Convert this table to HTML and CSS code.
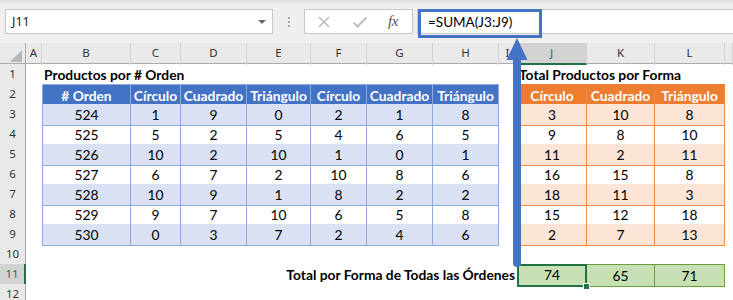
FILE: index.html
```html
<!DOCTYPE html>
<html lang="es">
<head>
    <meta charset="UTF-8">
    <title>Total Productos por Forma</title>
    <link rel="stylesheet" href="styles.css">
</head>
<body>
<div class="excel">
    <div class="formula-bar">
        <div class="name-box">J11<span class="drop"></span></div>
        <div class="grip"><i></i><i></i><i></i></div>
        <div class="fx-buttons">
            <svg class="btn-icon" width="14" height="14" viewBox="0 0 14 14"><path d="M2 2L12 12M12 2L2 12" stroke="#bdbdbd" stroke-width="1.6" fill="none"/></svg>
            <svg class="btn-icon" width="16" height="14" viewBox="0 0 16 14"><path d="M1.5 7.5L5.5 11.5L14.5 2.5" stroke="#bdbdbd" stroke-width="2" fill="none"/></svg>
            <span class="fx">fx</span>
        </div>
        <div class="formula">=SUMA(J3:J9)</div>
        <!-- callout around the formula -->
        <div class="formula-mark"></div>
    </div>

    <div class="sheet">
        <div class="row col-heads">
            <div class="corner"><span></span></div>
            <div class="ch">A</div><div class="ch">B</div><div class="ch">C</div><div class="ch">D</div>
            <div class="ch">E</div><div class="ch">F</div><div class="ch">G</div><div class="ch">H</div>
            <div class="ch">I</div><div class="ch active">J</div><div class="ch">K</div><div class="ch">L</div>
            <div class="ch"></div>
        </div>

        <div class="row">
            <div class="rh">1</div><div></div>
            <div class="title b-to-i">Productos por # Orden</div>
            <div class="title j-to-m">Total Productos por Forma</div>
        </div>

        <div class="row">
            <div class="rh">2</div><div></div>
            <div class="t th first"># Orden</div><div class="t th">Círculo</div><div class="t th">Cuadrado</div>
            <div class="t th">Triángulo</div><div class="t th">Círculo</div><div class="t th">Cuadrado</div>
            <div class="t th">Triángulo</div>
            <div></div>
            <div class="o th first">Círculo</div><div class="o th">Cuadrado</div><div class="o th">Triángulo</div>
            <div></div>
        </div>

        <div class="row">
            <div class="rh">3</div><div></div>
            <div class="t band first">524</div><div class="t band">1</div><div class="t band">9</div><div class="t band">0</div>
            <div class="t band">2</div><div class="t band">1</div><div class="t band">8</div>
            <div></div>
            <div class="o band first">3</div><div class="o band">10</div><div class="o band">8</div>
            <div></div>
        </div>

        <div class="row">
            <div class="rh">4</div><div></div>
            <div class="t first">525</div><div class="t">5</div><div class="t">2</div><div class="t">5</div>
            <div class="t">4</div><div class="t">6</div><div class="t">5</div>
            <div></div>
            <div class="o first">9</div><div class="o">8</div><div class="o">10</div>
            <div></div>
        </div>

        <div class="row">
            <div class="rh">5</div><div></div>
            <div class="t band first">526</div><div class="t band">10</div><div class="t band">2</div><div class="t band">10</div>
            <div class="t band">1</div><div class="t band">0</div><div class="t band">1</div>
            <div></div>
            <div class="o band first">11</div><div class="o band">2</div><div class="o band">11</div>
            <div></div>
        </div>

        <div class="row">
            <div class="rh">6</div><div></div>
            <div class="t first">527</div><div class="t">6</div><div class="t">7</div><div class="t">2</div>
            <div class="t">10</div><div class="t">8</div><div class="t">6</div>
            <div></div>
            <div class="o first">16</div><div class="o">15</div><div class="o">8</div>
            <div></div>
        </div>

        <div class="row">
            <div class="rh">7</div><div></div>
            <div class="t band first">528</div><div class="t band">10</div><div class="t band">9</div><div class="t band">1</div>
            <div class="t band">8</div><div class="t band">2</div><div class="t band">2</div>
            <div></div>
            <div class="o band first">18</div><div class="o band">11</div><div class="o band">3</div>
            <div></div>
        </div>

        <div class="row">
            <div class="rh">8</div><div></div>
            <div class="t first">529</div><div class="t">9</div><div class="t">7</div><div class="t">10</div>
            <div class="t">6</div><div class="t">5</div><div class="t">8</div>
            <div></div>
            <div class="o first">15</div><div class="o">12</div><div class="o">18</div>
            <div></div>
        </div>

        <div class="row">
            <div class="rh">9</div><div></div>
            <div class="t band first">530</div><div class="t band">0</div><div class="t band">3</div><div class="t band">7</div>
            <div class="t band">2</div><div class="t band">4</div><div class="t band">6</div>
            <div></div>
            <div class="o band first">2</div><div class="o band">7</div><div class="o band">13</div>
            <div></div>
        </div>

        <div class="row">
            <div class="rh">10</div>
        </div>

        <div class="row">
            <div class="rh active">11</div><div></div>
            <div class="title total b-to-i">Total por Forma de Todas las Órdenes</div>
            <div class="g selected">74<span class="handle"></span></div><div class="g">65</div><div class="g">71</div>
            <div></div>
        </div>

        <div class="row">
            <div class="rh">12</div>
        </div>
    </div>

    <svg class="arrow" width="733" height="300" viewBox="0 0 733 300">
        <rect x="513" y="54" width="8" height="213" rx="4" fill="#4472c4"/>
        <polygon points="517,38 527.5,60 506.5,60" fill="#4472c4"/>
    </svg>
</div>
</body>
</html>
```

FILE: styles.css
```css
body {
    margin: 0;
    background: #fff;
}

.excel {
    position: relative;
    width: 733px;
    height: 300px;
    overflow: hidden;
    font-family: 'Lato', 'Liberation Sans', sans-serif;
    color: #000;
}

/* formula bar */
.formula-bar {
    position: relative;
    display: flex;
    align-items: flex-start;
    height: 43px;
    padding: 9px 0 0 5px;
    box-sizing: border-box;
    background: linear-gradient(#dedede, #efefef 5px);
}

.name-box {
    position: relative;
    width: 268px;
    height: 25px;
    box-sizing: border-box;
    border: 1px solid #c6c6c6;
    background: #fff;
    font-family: 'Noto Sans', sans-serif;
    font-size: 12.5px;
    line-height: 23px;
    padding-left: 6px;
    color: #222;
}

.drop {
    position: absolute;
    right: 6px;
    top: 10px;
    border-left: 4px solid transparent;
    border-right: 4px solid transparent;
    border-top: 4px solid #6a6a6a;
}

.grip {
    display: flex;
    flex-direction: column;
    gap: 2px;
    width: 31px;
    padding-top: 8px;
    align-items: center;
}

.grip i {
    display: block;
    width: 2px;
    height: 2px;
    background: #aaa;
}

.fx-buttons {
    display: flex;
    align-items: center;
    width: 109px;
    height: 25px;
    box-sizing: border-box;
    border: 1px solid #c6c6c6;
    background: #fff;
    padding-left: 12px;
}

.btn-icon {
    margin-right: 21px;
}

.fx-buttons .btn-icon + .btn-icon {
    margin-right: 20px;
}

.fx {
    font-family: 'Liberation Serif', serif;
    font-style: italic;
    font-size: 15px;
    color: #555;
    letter-spacing: -0.5px;
}

.formula {
    flex: 1;
    height: 25px;
    margin-left: 4px;
    box-sizing: border-box;
    border: 1px solid #c6c6c6;
    border-right: none;
    background: #fff;
    font-size: 13.5px;
    line-height: 24px;
    padding-left: 10px;
}

.formula-mark {
    position: absolute;
    left: 418px;
    top: 9px;
    width: 124px;
    height: 29px;
    box-sizing: border-box;
    border: 3px solid #4472c4;
}

/* grid */
.row {
    display: grid;
    grid-template-columns: 26px 16px 89px 50px 66px 64px 56px 66px 66px 18px 70px 68px 70px 8px;
    height: 20px;
    font-size: 13.8px;
}

.row > div {
    box-sizing: border-box;
    line-height: 21px;
    white-space: nowrap;
}

.col-heads {
    height: 21px;
    background: #e9e9e9;
    border-bottom: 1px solid #ababab;
    box-sizing: border-box;
    font-family: 'Noto Sans', sans-serif;
    font-size: 11.5px;
    color: #333;
}

.col-heads > div {
    line-height: 20px;
    text-align: center;
    border-right: 1px solid #d2d2d2;
}

.corner {
    position: relative;
    border-right: 1px solid #ababab !important;
}

.corner span {
    position: absolute;
    right: 3px;
    bottom: 3px;
    border-left: 12px solid transparent;
    border-bottom: 12px solid #b6b6b6;
}

.ch.active {
    background: #d2d2d2;
    color: #217346;
    border-bottom: 2px solid #217346;
}

.rh {
    background: #e9e9e9;
    border-right: 1px solid #ababab;
    border-bottom: 1px solid #d4d4d4;
    text-align: center;
    font-family: 'Noto Sans', sans-serif;
    font-size: 11.5px;
    color: #333;
    line-height: 20px !important;
}

.rh.active {
    background: #d2d2d2;
    color: #217346;
    border-right: 2px solid #217346;
}

.b-to-i {
    grid-column: 3 / 11;
}

.j-to-m {
    grid-column: 11 / 15;
}

.title {
    font-weight: bold;
    padding-left: 2px;
}

.title.total {
    text-align: right;
    padding-right: 2px;
}

/* blue table */
.t, .o, .g {
    text-align: center;
    border-right: 1px solid #8ea9db;
    border-bottom: 1px solid #8ea9db;
}

.t.first {
    border-left: 1px solid #8ea9db;
}

.t.th {
    background: #4472c4;
    color: #fff;
    font-weight: bold;
    border-top: 1px solid #8ea9db;
}

.t.band {
    background: #d9e1f2;
}

/* orange table */
.o {
    border-color: #ee8a42;
}

.o.first {
    border-left: 1px solid #ee8a42;
}

.o.th {
    background: #ed7d31;
    color: #fff;
    font-weight: bold;
    border-top: 1px solid #ed7d31;
}

.o.band {
    background: #fce4d6;
}

/* totals row */
.g {
    background: #c6e0b4;
    border: 1px solid #6a9e45;
    border-left: none;
}

.g.selected {
    position: relative;
    border: 2px solid #217346;
    line-height: 17px !important;
}

.handle {
    position: absolute;
    right: -5px;
    bottom: -5px;
    width: 5px;
    height: 5px;
    background: #217346;
    border: 1px solid #fff;
}

.arrow {
    position: absolute;
    left: 0;
    top: 0;
    pointer-events: none;
}
```
